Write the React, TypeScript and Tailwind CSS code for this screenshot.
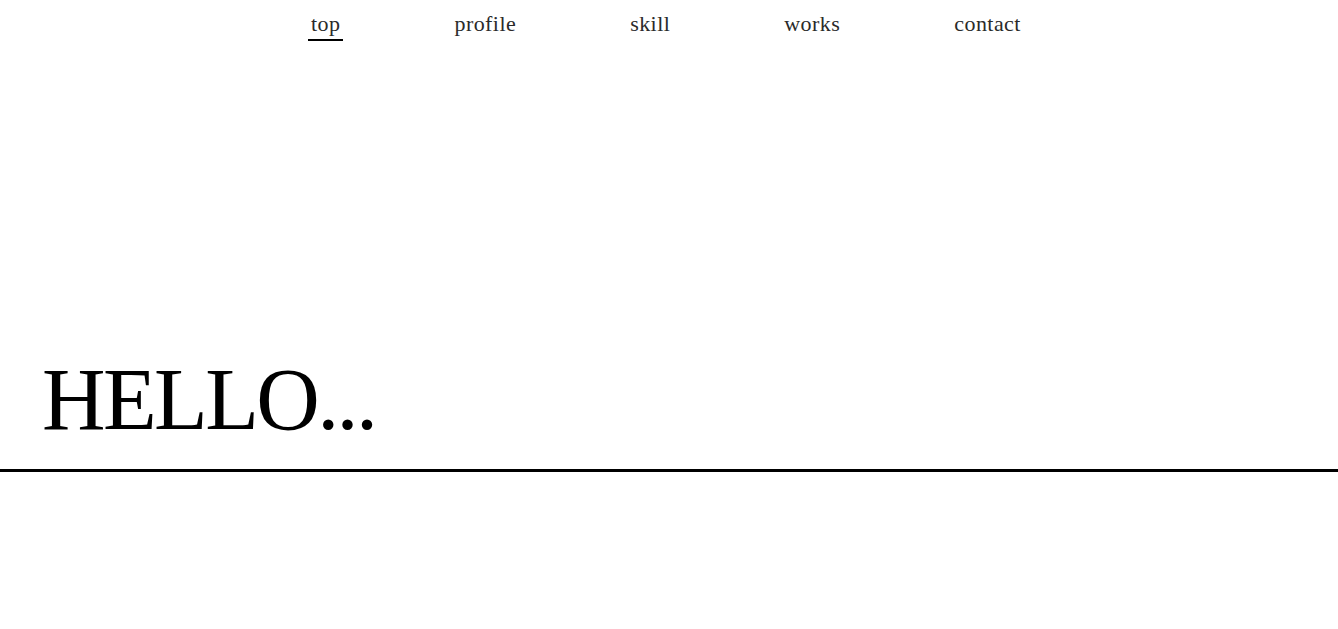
import React from 'react';

const NAV_ITEMS = ['top', 'profile', 'skill', 'works', 'contact'];

export default function App() {
    const active = 'top';

    return (
        <div className="min-h-screen bg-white font-['Liberation_Serif','DejaVu_Serif',serif]">
            <section className="h-[472px] flex flex-col border-b-[3px] border-black">
                <nav className="pt-[13px] pl-[308px] flex items-start gap-[108px]">
                    {NAV_ITEMS.map((item) => (
                        <a
                            key={item}
                            href={`#${item}`}
                            className={`px-[3px] pb-[4px] text-[22px] leading-[22px] tracking-[0.02em] text-[#2a2a2a] border-b-2 ${
                                item === active ? 'border-black' : 'border-transparent'
                            }`}
                        >
                            {item}
                        </a>
                    ))}
                </nav>

                <div className="flex-1 flex items-end pl-[42px]">
                    <h1 className="mb-[25px] text-[88px] leading-none tracking-[-0.03em] text-black">HELLO...</h1>
                </div>
            </section>
        </div>
    );
}
